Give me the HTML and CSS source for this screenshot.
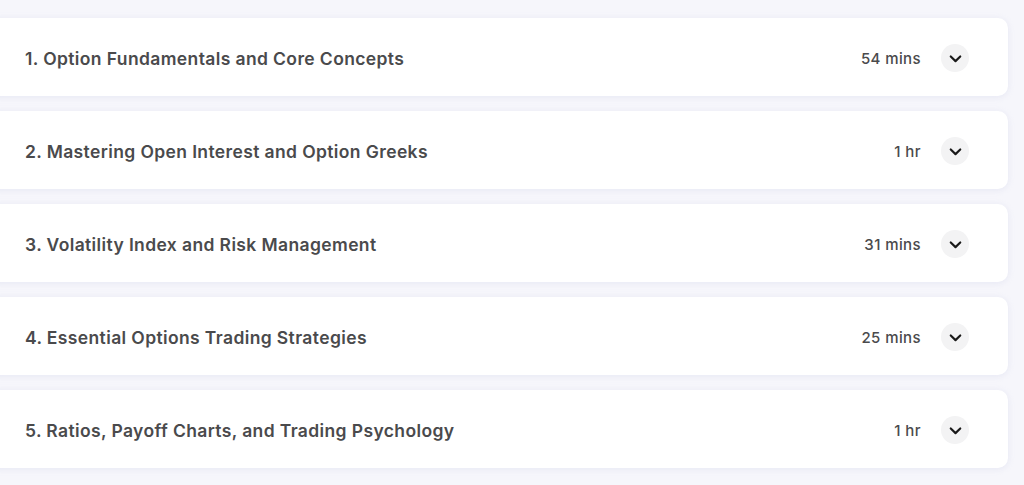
FILE: index.html
```html
<!DOCTYPE html>
<html>
<head>
<meta charset="utf-8">
<link rel="stylesheet" href="styles.css">
</head>
<body>
<div class="list">
  <div class="card"><span class="title">1. Option Fundamentals and Core Concepts</span><span class="meta"><span class="dur">54 mins</span><span class="btn"><svg viewBox="0 0 16 16" width="19" height="19"><path d="M4 6.3 L8 10.2 L12 6.3" fill="none" stroke="#1a1a1a" stroke-width="1.8" stroke-linecap="round" stroke-linejoin="round"/></svg></span></span></div>
  <div class="card"><span class="title">2. Mastering Open Interest and Option Greeks</span><span class="meta"><span class="dur">1 hr</span><span class="btn"><svg viewBox="0 0 16 16" width="19" height="19"><path d="M4 6.3 L8 10.2 L12 6.3" fill="none" stroke="#1a1a1a" stroke-width="1.8" stroke-linecap="round" stroke-linejoin="round"/></svg></span></span></div>
  <div class="card"><span class="title">3. Volatility Index and Risk Management</span><span class="meta"><span class="dur">31 mins</span><span class="btn"><svg viewBox="0 0 16 16" width="19" height="19"><path d="M4 6.3 L8 10.2 L12 6.3" fill="none" stroke="#1a1a1a" stroke-width="1.8" stroke-linecap="round" stroke-linejoin="round"/></svg></span></span></div>
  <div class="card"><span class="title">4. Essential Options Trading Strategies</span><span class="meta"><span class="dur">25 mins</span><span class="btn"><svg viewBox="0 0 16 16" width="19" height="19"><path d="M4 6.3 L8 10.2 L12 6.3" fill="none" stroke="#1a1a1a" stroke-width="1.8" stroke-linecap="round" stroke-linejoin="round"/></svg></span></span></div>
  <div class="card"><span class="title">5. Ratios, Payoff Charts, and Trading Psychology</span><span class="meta"><span class="dur">1 hr</span><span class="btn"><svg viewBox="0 0 16 16" width="19" height="19"><path d="M4 6.3 L8 10.2 L12 6.3" fill="none" stroke="#1a1a1a" stroke-width="1.8" stroke-linecap="round" stroke-linejoin="round"/></svg></span></span></div>
</div>
</body>
</html>
```
FILE: styles.css
```css
html, body {
  margin: 0;
  padding: 0;
  background: #f6f6fb;
  height: 100%;
  overflow: hidden;
}
body {
  font-family: Inter, "Noto Sans", sans-serif;
}
.list {
  display: flex;
  flex-direction: column;
  gap: 15px;
  padding-top: 18px;
  margin-left: -12px;
  width: 1020px;
}
.card {
  height: 78px;
  background: #ffffff;
  border-radius: 10px;
  box-shadow: 0 1px 6px rgba(210, 212, 235, 0.45);
  display: flex;
  align-items: center;
  justify-content: space-between;
  padding: 2px 39px 0 37px;
  box-sizing: border-box;
}
.title {
  font-size: 17.5px;
  font-weight: 600;
  color: #4a4a4c;
  letter-spacing: 0.38px;
}
.meta {
  display: flex;
  align-items: center;
  gap: 20px;
}
.dur {
  font-size: 15px;
  font-weight: 500;
  color: #4a4a4c;
  letter-spacing: 0.4px;
}
.btn {
  width: 28px;
  height: 28px;
  border-radius: 50%;
  background: #f3f3f4;
  display: flex;
  align-items: center;
  justify-content: center;
}
```
